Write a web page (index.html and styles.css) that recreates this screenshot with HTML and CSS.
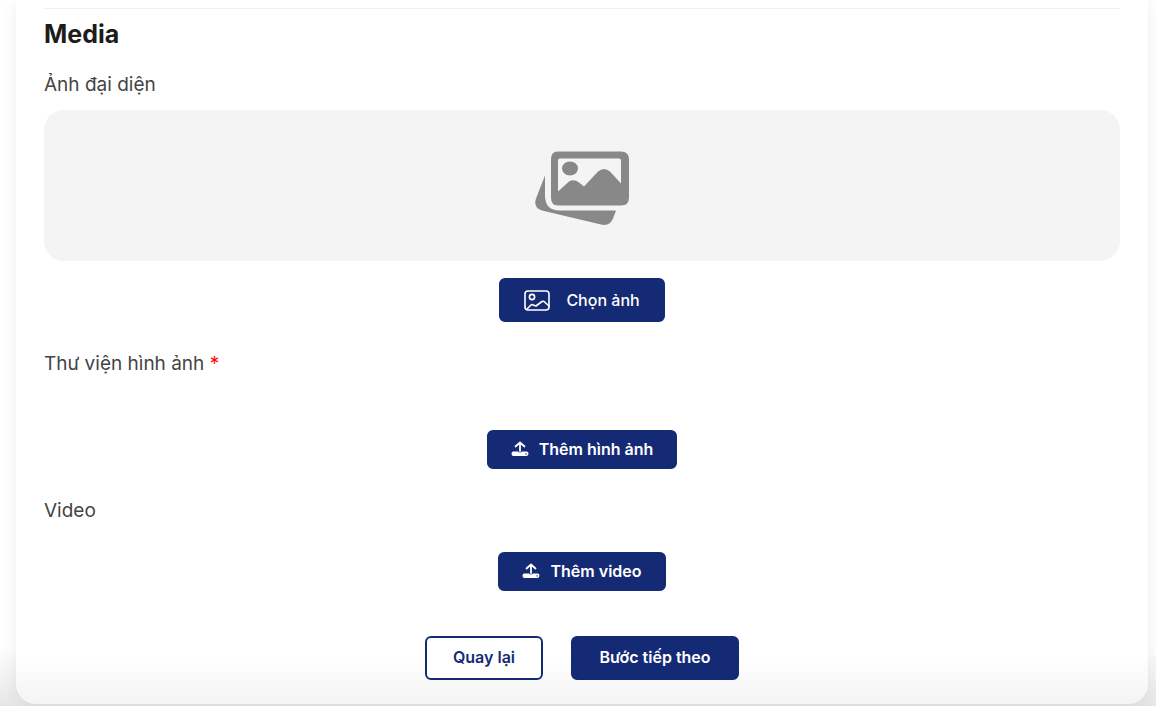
FILE: index.html
```html
<!DOCTYPE html>
<html lang="vi">
<head>
<meta charset="utf-8">
<meta name="viewport" content="width=device-width, initial-scale=1">
<title>Media</title>
<link rel="stylesheet" href="styles.css">
</head>
<body>
<main class="card">
  <form class="form">
    <hr class="divider">
    <h2 class="title">Media</h2>

    <section class="field">
      <h3 class="label">Ảnh đại diện</h3>
      <div class="preview">
        <svg class="preview-icon" viewBox="0 0 94 74" aria-hidden="true">
          <path fill="#888" fill-rule="evenodd" d="M23 0H86Q94 0 94 8V46Q94 54 86 54H23Q16 54 16 46V8Q16 0 23 0ZM25 7Q23 7 23 9V40L34 30Q39 27 44 31L49 35L63 20Q69 15 75 20L86 32V9Q86 7 84 7Z"/>
          <ellipse cx="35" cy="17" rx="8" ry="7" fill="#888"/>
          <path fill="#888" d="M10 24V44Q10 59 25 59H81L78 67Q75 75 66 73L7 59Q-2 56 1 47Z"/>
        </svg>
      </div>
      <button class="btn btn-pick" type="button">
        <svg class="pick-icon" viewBox="0 0 26 21" fill="none" stroke="currentColor" stroke-width="1.6" stroke-linejoin="round" stroke-linecap="round" aria-hidden="true">
          <rect x="1" y="1" width="24" height="19" rx="3"/>
          <circle cx="8" cy="7" r="2.6"/>
          <path d="M3 19L7 15Q8 14 9 15L12 16L18 11.500Q19 11 20 11.500L25 16"/>
        </svg>
        Chọn ảnh
      </button>
    </section>

    <section class="field">
      <h3 class="label">Thư viện hình ảnh <span class="required">*</span></h3>
      <button class="btn btn-upload btn-gallery" type="button">
        <svg class="upload-icon" viewBox="0 0 18 16" aria-hidden="true">
          <path fill="none" stroke="currentColor" stroke-width="1.8" stroke-linecap="round" stroke-linejoin="round" d="M9 10V1.500M4.500 5.500L9 1.500L13.500 5.500"/>
          <path fill="currentColor" fill-rule="evenodd" d="M2.500 10.500H7Q9 12.500 11 10.500H15.500Q17.500 10.500 17.500 12.500T15.500 15H2.500Q.5 15 .5 12.700T2.500 10.500ZM14.500 12.200V13.400H15.700V12.200Z"/>
        </svg>
        Thêm hình ảnh
      </button>
    </section>

    <section class="field">
      <h3 class="label">Video</h3>
      <button class="btn btn-upload btn-video" type="button">
        <svg class="upload-icon" viewBox="0 0 18 16" aria-hidden="true">
          <path fill="none" stroke="currentColor" stroke-width="1.8" stroke-linecap="round" stroke-linejoin="round" d="M9 10V1.500M4.500 5.500L9 1.500L13.500 5.500"/>
          <path fill="currentColor" fill-rule="evenodd" d="M2.500 10.500H7Q9 12.500 11 10.500H15.500Q17.500 10.500 17.500 12.500T15.500 15H2.500Q.5 15 .5 12.700T2.500 10.500ZM14.500 12.200V13.400H15.700V12.200Z"/>
        </svg>
        Thêm video
      </button>
    </section>

    <div class="actions">
      <button class="btn btn-outline" type="button">Quay lại</button>
      <button class="btn btn-next" type="submit">Bước tiếp theo</button>
    </div>
  </form>
</main>
</body>
</html>
```
FILE: styles.css
```css
* {
  box-sizing: border-box;
}

body {
  margin: 0;
  background: linear-gradient(to top, #e6e6e6, #fff 60px);
  color: #444;
  font-family: Inter, "Noto Sans", sans-serif;
}

.card {
  margin: 0 8px 2px 16px;
  padding: 8px 28px 24px;
  border-radius: 0 0 20px 20px;
  background: linear-gradient(to top, #f4f4f4, #fff 50px);
  box-shadow: 0 2px 16px rgba(0, 0, 0, 0.07);
}

.form {
  display: flex;
  flex-direction: column;
}

.divider {
  width: 100%;
  height: 1px;
  margin: 0 0 9px;
  border: 0;
  background: #f0f0f0;
}

.title {
  margin: 0 0 23px;
  color: #1c1c1c;
  font-size: 25px;
  font-weight: 700;
  line-height: 32px;
}

.field {
  display: flex;
  flex-direction: column;
  align-items: center;
  margin-bottom: 30px;
}

.label {
  align-self: stretch;
  margin: 0;
  font-size: 19px;
  font-weight: 400;
  line-height: 24px;
}

.required {
  color: #f00;
}

.preview {
  display: flex;
  align-items: center;
  justify-content: center;
  width: 100%;
  margin: 13px 0 17px;
  padding: 41px 0 35px;
  border-radius: 20px;
  background: #f4f4f4;
}

.preview-icon {
  width: 94px;
  height: 75px;
}

.btn {
  display: inline-flex;
  align-items: center;
  justify-content: center;
  height: 44px;
  padding: 0 22px 2px;
  border: 2px solid #152a74;
  border-radius: 6px;
  background: #152a74;
  color: #fff;
  font: 600 16px/20px Inter, "Noto Sans", sans-serif;
  cursor: pointer;
}

.btn-pick {
  gap: 16px;
  min-width: 166px;
  padding-bottom: 0;
  font-weight: 500;
}

.pick-icon {
  width: 26px;
  height: 21px;
}

.btn-upload {
  gap: 10px;
  min-width: 166px;
  height: 39px;
  padding-bottom: 1px;
}

.btn-gallery {
  margin-top: 54px;
}

.btn-video {
  margin-top: 29px;
}

.upload-icon {
  width: 18px;
  height: 16px;
}

.actions {
  display: flex;
  justify-content: center;
  gap: 28px;
  margin-top: 15px;
}

.btn-outline {
  min-width: 118px;
  background: #fff;
  color: #152a74;
}

.btn-next {
  min-width: 168px;
}
```
